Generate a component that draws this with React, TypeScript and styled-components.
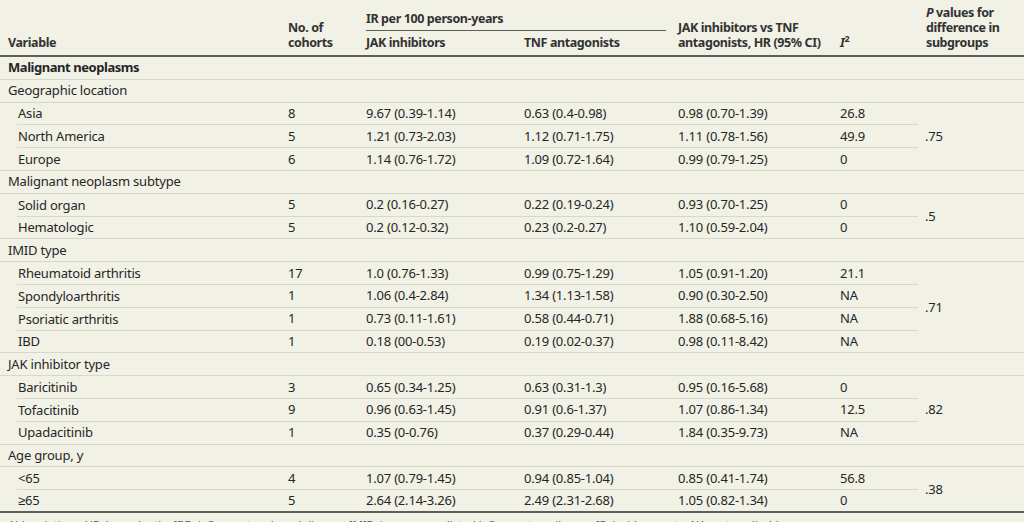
import React from "react";
import styled, { createGlobalStyle } from "styled-components";

const GlobalStyle = createGlobalStyle`
  html, body {
    margin: 0;
    background: #f1f1e6;
    overflow: hidden;
  }
  body {
    font-family: "Noto Sans", "Liberation Sans", Arial, sans-serif;
    color: #262626;
  }
`;

const RULE = "#d7d7cc";
const DARK = "#5e5e5e";

const Table = styled.table`
  width: 1024px;
  table-layout: fixed;
  border-collapse: separate;
  border-spacing: 0;
  font-size: 13px;
  line-height: 15px;
  letter-spacing: -0.2px;
`;

const HeadRow = styled.tr<{ $h: number }>`
  height: ${(p) => p.$h}px;
`;

const HeadCell = styled.th`
  text-align: left;
  vertical-align: bottom;
  font-size: 12.5px;
  font-weight: 700;
  letter-spacing: -0.4px;
  color: #333;
  padding: 0 0 5px 8px;
  border-bottom: 2px solid ${DARK};
`;

const SpanHead = styled.th`
  text-align: left;
  vertical-align: bottom;
  font-size: 12.5px;
  font-weight: 700;
  letter-spacing: -0.4px;
  color: #333;
  padding: 0 4px 0 8px;
`;

const SpanRule = styled.div`
  padding-bottom: 4px;
  border-bottom: 1.5px solid ${DARK};
`;

const Row = styled.tr`
  height: 22.8px;
`;

const Cell = styled.td<{ $indent?: boolean; $bold?: boolean; $full?: boolean }>`
  padding: 0 0 0 ${(p) => (p.$indent ? 18 : 8)}px;
  vertical-align: middle;
  white-space: nowrap;
  font-weight: ${(p) => (p.$bold ? 700 : 400)};
  letter-spacing: ${(p) => (p.$bold ? "-0.45px" : "-0.2px")};
  border-bottom: ${(p) => (p.$indent && !p.$full ? "none" : `1px solid ${RULE}`)};
  background: ${(p) =>
    p.$indent && !p.$full
      ? `linear-gradient(${RULE}, ${RULE}) no-repeat 17px 100% / calc(100% - 17px) 1px`
      : "none"};
`;

const PCell = styled.td<{ $end?: boolean }>`
  padding: 0 0 0 7px;
  vertical-align: middle;
  border-bottom: ${(p) => (p.$end ? `2px solid ${DARK}` : `1px solid ${RULE}`)};
`;

const Body = styled.tbody`
  tr:last-child td {
    border-bottom: 2px solid ${DARK};
    background: none;
  }
`;

const Footnote = styled.div`
  margin-top: 4px;
  padding-left: 8px;
  font-size: 11px;
  color: #555;
  white-space: nowrap;
`;

type Line = [string, string, string, string, string, string];

const groups: { title: string; p: string; rows: Line[] }[] = [
  {
    title: "Geographic location",
    p: ".75",
    rows: [
      ["Asia", "8", "9.67 (0.39-1.14)", "0.63 (0.4-0.98)", "0.98 (0.70-1.39)", "26.8"],
      ["North America", "5", "1.21 (0.73-2.03)", "1.12 (0.71-1.75)", "1.11 (0.78-1.56)", "49.9"],
      ["Europe", "6", "1.14 (0.76-1.72)", "1.09 (0.72-1.64)", "0.99 (0.79-1.25)", "0"],
    ],
  },
  {
    title: "Malignant neoplasm subtype",
    p: ".5",
    rows: [
      ["Solid organ", "5", "0.2 (0.16-0.27)", "0.22 (0.19-0.24)", "0.93 (0.70-1.25)", "0"],
      ["Hematologic", "5", "0.2 (0.12-0.32)", "0.23 (0.2-0.27)", "1.10 (0.59-2.04)", "0"],
    ],
  },
  {
    title: "IMID type",
    p: ".71",
    rows: [
      ["Rheumatoid arthritis", "17", "1.0 (0.76-1.33)", "0.99 (0.75-1.29)", "1.05 (0.91-1.20)", "21.1"],
      ["Spondyloarthritis", "1", "1.06 (0.4-2.84)", "1.34 (1.13-1.58)", "0.90 (0.30-2.50)", "NA"],
      ["Psoriatic arthritis", "1", "0.73 (0.11-1.61)", "0.58 (0.44-0.71)", "1.88 (0.68-5.16)", "NA"],
      ["IBD", "1", "0.18 (00-0.53)", "0.19 (0.02-0.37)", "0.98 (0.11-8.42)", "NA"],
    ],
  },
  {
    title: "JAK inhibitor type",
    p: ".82",
    rows: [
      ["Baricitinib", "3", "0.65 (0.34-1.25)", "0.63 (0.31-1.3)", "0.95 (0.16-5.68)", "0"],
      ["Tofacitinib", "9", "0.96 (0.63-1.45)", "0.91 (0.6-1.37)", "1.07 (0.86-1.34)", "12.5"],
      ["Upadacitinib", "1", "0.35 (0-0.76)", "0.37 (0.29-0.44)", "1.84 (0.35-9.73)", "NA"],
    ],
  },
  {
    title: "Age group, y",
    p: ".38",
    rows: [
      ["<65", "4", "1.07 (0.79-1.45)", "0.94 (0.85-1.04)", "0.85 (0.41-1.74)", "56.8"],
      ["≥65", "5", "2.64 (2.14-3.26)", "2.49 (2.31-2.68)", "1.05 (0.82-1.34)", "0"],
    ],
  },
];

const widths = [280, 78, 158, 154, 162, 86, 106];

export default function App() {
  return (
    <>
      <GlobalStyle />
      <Table>
        <colgroup>
          {widths.map((w, i) => (
            <col key={i} style={{ width: w }} />
          ))}
        </colgroup>
        <thead>
          <HeadRow $h={31}>
            <HeadCell rowSpan={2}>Variable</HeadCell>
            <HeadCell rowSpan={2}>
              No. of
              <br />
              cohorts
            </HeadCell>
            <SpanHead colSpan={2}>
              <SpanRule>IR per 100 person-years</SpanRule>
            </SpanHead>
            <HeadCell rowSpan={2}>
              JAK inhibitors vs TNF
              <br />
              antagonists, HR (95% CI)
            </HeadCell>
            <HeadCell rowSpan={2}>
              <i>I</i>
              <sup style={{ fontSize: 9, lineHeight: 0 }}>2</sup>
            </HeadCell>
            <HeadCell rowSpan={2}>
              <i>P</i> values for
              <br />
              difference in
              <br />
              subgroups
            </HeadCell>
          </HeadRow>
          <HeadRow $h={26}>
            <HeadCell>JAK inhibitors</HeadCell>
            <HeadCell>TNF antagonists</HeadCell>
          </HeadRow>
        </thead>
        <Body>
          <Row>
            <Cell $bold colSpan={7}>
              Malignant neoplasms
            </Cell>
          </Row>
          {groups.map((g, gi) => (
            <React.Fragment key={g.title}>
              <Row>
                <Cell colSpan={7}>{g.title}</Cell>
              </Row>
              {g.rows.map((r, i) => {
                const last = i === g.rows.length - 1;
                return (
                  <Row key={r[0]}>
                    <Cell $indent $full={last}>
                      {r[0]}
                    </Cell>
                    {r.slice(1).map((v, j) => (
                      <Cell key={j}>{v}</Cell>
                    ))}
                    {i === 0 && (
                      <PCell rowSpan={g.rows.length} $end={gi === groups.length - 1}>
                        {g.p}
                      </PCell>
                    )}
                  </Row>
                );
              })}
            </React.Fragment>
          ))}
        </Body>
      </Table>
      <Footnote>
        Abbreviations: HR, hazard ratio; IBD, inflammatory bowel disease; IMID, immune-mediated inflammatory disease; IR,
        incidence rate; NA, not applicable.
      </Footnote>
    </>
  );
}
